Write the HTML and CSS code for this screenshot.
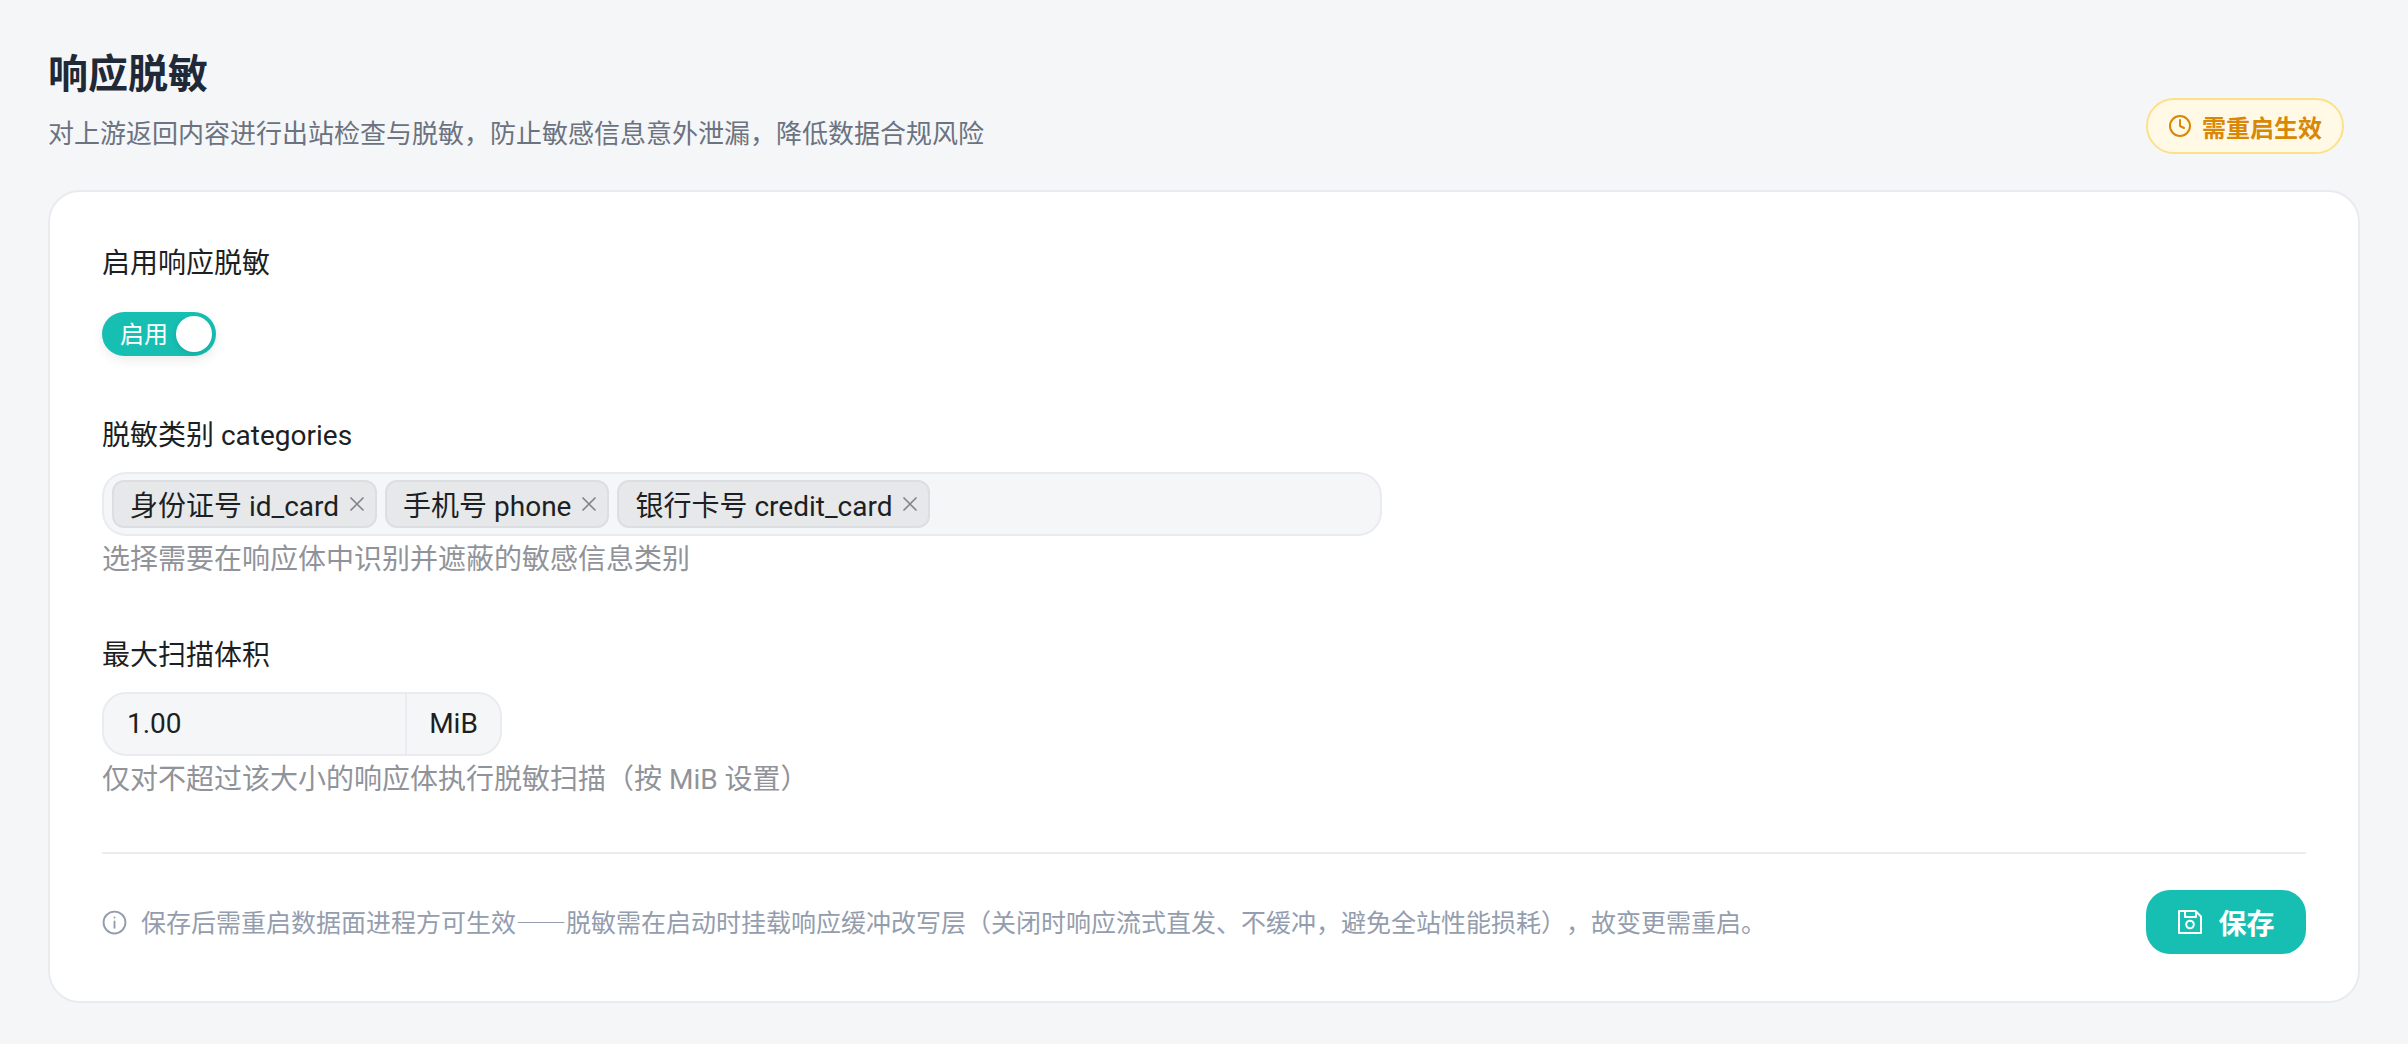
FILE: index.html
```html
<!DOCTYPE html>
<html lang="zh-CN">

<head>
    <meta charset="UTF-8">
    <meta name="viewport" content="width=device-width, initial-scale=1.0">
    <title>响应脱敏</title>
    <link rel="stylesheet" href="styles.css">
</head>

<body>
    <header class="page-head">
        <div class="head-text">
            <h1 class="title">响应脱敏</h1>
            <p class="subtitle">对上游返回内容进行出站检查与脱敏，防止敏感信息意外泄漏，降低数据合规风险</p>
        </div>
        <span class="badge">
            <svg class="badge-icon" viewBox="0 0 24 24" fill="none" stroke="currentColor" stroke-width="2" stroke-linecap="round" stroke-linejoin="round">
                <circle cx="12" cy="12" r="10"></circle>
                <polyline points="12 6 12 12 16 14"></polyline>
            </svg>
            需重启生效
        </span>
    </header>

    <section class="card">
        <div class="field field-switch">
            <label class="label">启用响应脱敏</label>
            <div class="switch">
                <span class="switch-text">启用</span>
                <span class="knob"></span>
            </div>
        </div>

        <div class="field field-tags">
            <label class="label">脱敏类别 categories</label>
            <div class="tag-input">
                <span class="tag">身份证号 id_card
                    <svg class="tag-close" viewBox="0 0 16 16"><path d="M1.5 1.5l13 13M14.5 1.5l-13 13"></path></svg>
                </span>
                <span class="tag">手机号 phone
                    <svg class="tag-close" viewBox="0 0 16 16"><path d="M1.5 1.5l13 13M14.5 1.5l-13 13"></path></svg>
                </span>
                <span class="tag">银行卡号 credit_card
                    <svg class="tag-close" viewBox="0 0 16 16"><path d="M1.5 1.5l13 13M14.5 1.5l-13 13"></path></svg>
                </span>
            </div>
            <p class="help">选择需要在响应体中识别并遮蔽的敏感信息类别</p>
        </div>

        <div class="field field-size">
            <label class="label">最大扫描体积</label>
            <div class="number-input">
                <span class="number-value">1.00</span>
                <span class="number-unit">MiB</span>
            </div>
            <p class="help">仅对不超过该大小的响应体执行脱敏扫描（按 MiB 设置）</p>
        </div>

        <footer class="card-foot">
            <p class="note">
                <svg class="note-icon" viewBox="0 0 24 24" fill="none" stroke="currentColor" stroke-width="2" stroke-linecap="round" stroke-linejoin="round">
                    <circle cx="12" cy="12" r="10.5"></circle>
                    <path d="M12 11v6M12 7.2v.1"></path>
                </svg>
                <span class="note-text">保存后需重启数据面进程方可生效——脱敏需在启动时挂载响应缓冲改写层（关闭时响应流式直发、不缓冲，避免全站性能损耗），故变更需重启。</span>
            </p>
            <button class="save-btn">
                <svg class="save-icon" viewBox="0 0 26 26" fill="none" stroke="currentColor" stroke-width="2" stroke-linejoin="round">
                    <path d="M2 2h16.5l5.5 5.5V24H2z"></path>
                    <path d="M8 2v6h11V3"></path>
                    <circle cx="13" cy="15.5" r="3.8"></circle>
                </svg>
                保存
            </button>
        </footer>
    </section>
</body>

</html>
```

FILE: styles.css
```css
* {
    padding: 0;
    margin: 0;
    box-sizing: border-box;
}

body {
    height: 100vh;
    padding: 49px 48px 0;
    background: #f5f6f8;
    font-family: Roboto, "Noto Sans CJK SC", sans-serif;
    color: #1c1f23;
    overflow: hidden;
    text-spacing-trim: space-all;
}

.page-head {
    display: flex;
    justify-content: space-between;
    align-items: flex-end;
    margin-bottom: 36px;
    padding-right: 16px;
}

.title {
    font-size: 40px;
    line-height: 52px;
    font-weight: 700;
    color: #1f2937;
}

.subtitle {
    margin-top: 13px;
    font-size: 26px;
    line-height: 40px;
    color: #6b7280;
}

.badge {
    display: flex;
    align-items: center;
    gap: 10px;
    height: 56px;
    padding: 0 20px;
    border: 2px solid #fde08b;
    border-radius: 28px;
    background: #fff9e6;
    color: #d98706;
    font-size: 24px;
    font-weight: 700;
}

.badge-icon {
    width: 24px;
    height: 24px;
}

.card {
    padding: 52px 52px 47px;
    border: 2px solid #e9ebef;
    border-radius: 32px;
    background: #fff;
}

.field {
    margin-bottom: 56px;
}

.field-switch {
    margin-bottom: 60px;
}

.field-size {
    margin-bottom: 52px;
}

.label {
    display: block;
    margin-bottom: 16px;
    font-size: 28px;
    line-height: 40px;
    color: #1c1f23;
}

.field-switch .label {
    margin-bottom: 28px;
}

.switch {
    position: relative;
    width: 114px;
    height: 44px;
    border-radius: 22px;
    background: #17bfb3;
    box-shadow: 0 4px 12px rgba(0, 0, 0, 0.08);
}

.switch-text {
    position: absolute;
    left: 18px;
    top: 1px;
    font-size: 24px;
    line-height: 44px;
    color: #fff;
}

.knob {
    position: absolute;
    top: 4px;
    right: 4px;
    width: 36px;
    height: 36px;
    border-radius: 50%;
    background: #fff;
    box-shadow: 0 2px 6px rgba(0, 0, 0, 0.12);
}

.tag-input {
    display: flex;
    align-items: center;
    gap: 8px;
    width: 1280px;
    height: 64px;
    padding: 0 8px;
    border: 2px solid #e9ebef;
    border-radius: 24px;
    background: #f5f6f8;
}

.tag {
    display: flex;
    align-items: center;
    gap: 10px;
    height: 48px;
    padding: 0 10px 0 16px;
    border: 2px solid #dcdee1;
    border-radius: 12px;
    background: #e6e8ea;
    font-size: 28px;
    white-space: nowrap;
}

.tag-close {
    width: 16px;
    height: 16px;
    fill: none;
    stroke: #808488;
    stroke-width: 1.6;
}

.help {
    margin-top: 4px;
    font-size: 28px;
    line-height: 40px;
    color: #909399;
}

.number-input {
    display: flex;
    width: 400px;
    height: 64px;
    border: 2px solid #e9ebef;
    border-radius: 24px;
    background: #f5f6f8;
    font-size: 28px;
    line-height: 60px;
}

.number-value {
    flex: 1;
    padding-left: 23px;
    border-right: 2px solid #e9ebef;
}

.number-unit {
    width: 93px;
    text-align: center;
}

.card-foot {
    display: flex;
    justify-content: space-between;
    align-items: center;
    padding-top: 36px;
    border-top: 2px solid #e9ebef;
}

.note {
    display: flex;
    align-items: center;
    gap: 14px;
    font-family: "Noto Sans CJK SC", sans-serif;
    font-size: 25px;
    color: #949dad;
}

.note-text {
    margin-bottom: 3px;
}

.note-icon {
    width: 25px;
    height: 25px;
    stroke-width: 1.8;
}

.save-btn {
    display: flex;
    align-items: center;
    justify-content: center;
    gap: 15px;
    width: 160px;
    height: 64px;
    border: 0;
    border-radius: 24px;
    background: #17bfb3;
    color: #fff;
    font-family: inherit;
    font-size: 28px;
    font-weight: 700;
}

.save-icon {
    width: 26px;
    height: 26px;
}
```
